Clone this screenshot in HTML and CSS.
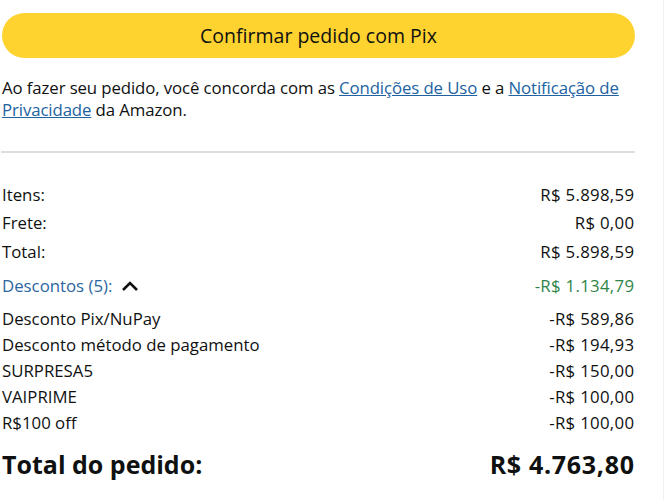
FILE: index.html
```html
<!DOCTYPE html>
<html lang="pt-BR">
<head>
    <meta charset="UTF-8">
    <meta name="viewport" content="width=device-width, initial-scale=1.0">
    <title>Resumo do pedido</title>
    <link rel="stylesheet" href="styles.css">
</head>
<body>
    <div class="checkout">
        <button class="place-order" type="button">Confirmar pedido com Pix</button>

        <p class="terms">
            Ao fazer seu pedido, você concorda com as <a href="#">Condições de Uso</a> e a <a href="#">Notificação de Privacidade</a> da Amazon.
        </p>

        <hr class="divider">

        <!-- Resumo -->
        <ul class="summary">
            <li class="row"><span>Itens:</span><span class="amount">R$ 5.898,59</span></li>
            <li class="row"><span>Frete:</span><span class="amount">R$ 0,00</span></li>
            <li class="row"><span>Total:</span><span class="amount">R$ 5.898,59</span></li>
            <li class="row discounts-head">
                <span class="discounts-label">Descontos (5):
                    <svg class="chevron" width="18" height="12" viewBox="0 0 18 12">
                        <path d="M2 10 L9 3 L16 10" fill="none" stroke="#0f1111" stroke-width="2.6" stroke-linejoin="miter"/>
                    </svg>
                </span>
                <span class="amount discount-total">-R$ 1.134,79</span>
            </li>
        </ul>

        <ul class="discount-list">
            <li class="row"><span>Desconto Pix/NuPay</span><span class="amount">-R$ 589,86</span></li>
            <li class="row"><span>Desconto método de pagamento</span><span class="amount">-R$ 194,93</span></li>
            <li class="row"><span>SURPRESA5</span><span class="amount">-R$ 150,00</span></li>
            <li class="row"><span>VAIPRIME</span><span class="amount">-R$ 100,00</span></li>
            <li class="row"><span>R$100 off</span><span class="amount">-R$ 100,00</span></li>
        </ul>

        <div class="row order-total"><span>Total do pedido:</span><span class="amount">R$ 4.763,80</span></div>
    </div>
</body>
</html>
```

FILE: styles.css
```css
body {
    margin: 0;
    background: #fff;
    color: #0f1111;
    font-family: "Open Sans", "Noto Sans", Arial, sans-serif;
    font-size: 16.8px;
}

.checkout {
    width: 633px;
    padding: 13px 28px 0 2px;
    border-right: 1px solid #f0f0f0;
    min-height: 487px;
    box-sizing: content-box;
}

.place-order {
    display: block;
    width: 100%;
    height: 45px;
    border: none;
    border-radius: 23px;
    background-color: #fed22f;
    color: #0f1111;
    font-family: inherit;
    font-size: 19.5px;
    cursor: pointer;
}

.terms {
    margin: 19px 0 0;
    line-height: 22px;
    letter-spacing: -0.1px;
}

.terms a {
    color: #2162a1;
    text-decoration: underline;
}

.divider {
    margin: 30px 0 0 -1px;
    border: none;
    height: 2px;
    background: #dedede;
}

.summary,
.discount-list {
    list-style: none;
    margin: 0;
    padding: 0;
}

.summary {
    margin-top: 27px;
}

.row {
    display: flex;
    justify-content: space-between;
    align-items: center;
    height: 28.5px;
    padding-right: 1px;
}

.amount {
    letter-spacing: 0.3px;
    margin-right: -0.3px;
}

.discounts-head {
    height: 28px;
    margin: 6px 0;
}

.discounts-label {
    color: #2b669f;
    display: flex;
    align-items: center;
    gap: 9px;
}

.discount-total {
    color: #2f8548;
}

.discount-list .row {
    height: 26px;
}

.order-total {
    margin-top: 11px;
    height: 34px;
    font-size: 25px;
    font-weight: bold;
}

.order-total .amount {
    letter-spacing: 0.7px;
    margin-right: -0.7px;
}
```
